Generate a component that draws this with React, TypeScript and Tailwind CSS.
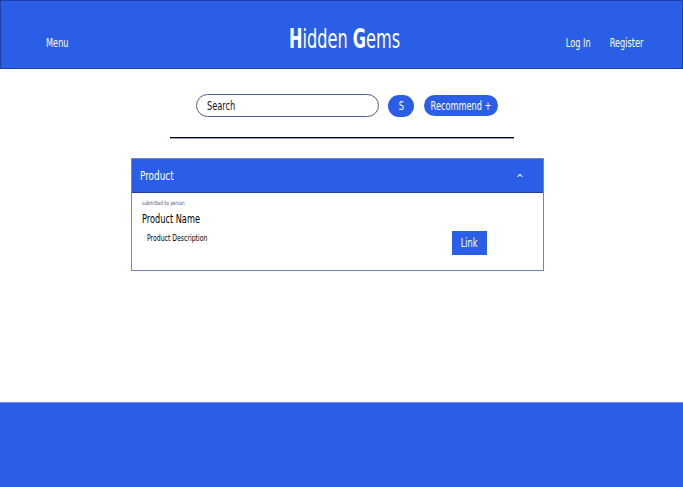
import React from "react";

const font = { fontFamily: '"DejaVu Sans", "Liberation Sans", sans-serif' };

function L({ children, className = "" }: { children: React.ReactNode; className?: string }) {
  return <span className={"inline-block whitespace-nowrap origin-left scale-x-[0.76] " + className}>{children}</span>;
}
function C({ children, className = "" }: { children: React.ReactNode; className?: string }) {
  return <span className={"inline-block whitespace-nowrap origin-center scale-x-[0.76] " + className}>{children}</span>;
}
function R({ children, className = "" }: { children: React.ReactNode; className?: string }) {
  return <span className={"inline-block whitespace-nowrap origin-right scale-x-[0.76] " + className}>{children}</span>;
}

export default function App() {
  return (
    <div className="w-[683px] h-[487px] flex flex-col bg-white font-stretch-condensed" style={font}>
      <header className="h-[69px] shrink-0 bg-[#2b5ee6] border border-[#1f3fa8] flex items-center pl-[45px] pr-[39px] text-white">
        <div className="flex-1 pt-[16px] text-[12px]">
          <L>Menu</L>
        </div>
        <div className="text-[26px] font-medium pt-[9px]">
          <span className="inline-block whitespace-nowrap origin-center scale-x-[0.69]">
            <span className="font-bold">H</span>idden <span className="font-bold">G</span>ems
          </span>
        </div>
        <div className="flex-1 flex justify-end gap-[8px] pt-[16px] text-[12px]">
          <R>Log In</R>
          <R>Register</R>
        </div>
      </header>

      <main className="flex-1 flex flex-col items-center">
        <div className="mt-[25px] ml-[11px] flex items-center gap-[9px]">
          <div className="w-[183px] h-[23px] rounded-full border border-[#4f5d8f] flex items-center pl-[10px] text-[12px] text-[#0b1230]">
            <L>Search</L>
          </div>
          <div className="w-[26px] h-[22px] rounded-full bg-[#2b5ee6] text-white text-[12px] flex items-center justify-center">
            <C>S</C>
          </div>
          <div className="ml-[1px] w-[74px] h-[21px] rounded-full bg-[#2b5ee6] text-white text-[12px] flex items-center justify-center">
            <C>Recommend +</C>
          </div>
        </div>
        <div className="mt-[20px] w-[344px] border-t border-black border-b border-b-[#9aa4c4]"></div>

        <div className="mt-[19px] mr-[9px] w-[413px] h-[113px] border border-[#7686b4]">
          <div className="h-[34px] bg-[#2b5ee6] border-b border-[#1f3fa8] flex items-center pl-[8px] text-white text-[13px]">
            <span className="flex-1 pt-[1px]">
              <L>Product</L>
            </span>
            <span className="mr-[19px] pt-[5px] text-[10px]">^</span>
          </div>
          <div className="px-[10px] pt-[5px] relative">
            <div className="text-[6px] leading-[9px] text-[#4b5575]">
              <L>submitted by person</L>
            </div>
            <div className="mt-[3px] text-[12px] text-black">
              <L>Product Name</L>
            </div>
            <div className="mt-[4px] ml-[5px] text-[9px] text-black">
              <L>Product Description</L>
            </div>
            <div className="absolute left-[320px] top-[38px] w-[35px] h-[24px] bg-[#2b5ee6] text-white text-[12px] flex items-center justify-center">
              <C>Link</C>
            </div>
          </div>
        </div>
      </main>

      <footer className="h-[85px] shrink-0 bg-[#2b5ee6] border-t border-[#6d8ff0]"></footer>
    </div>
  );
}
